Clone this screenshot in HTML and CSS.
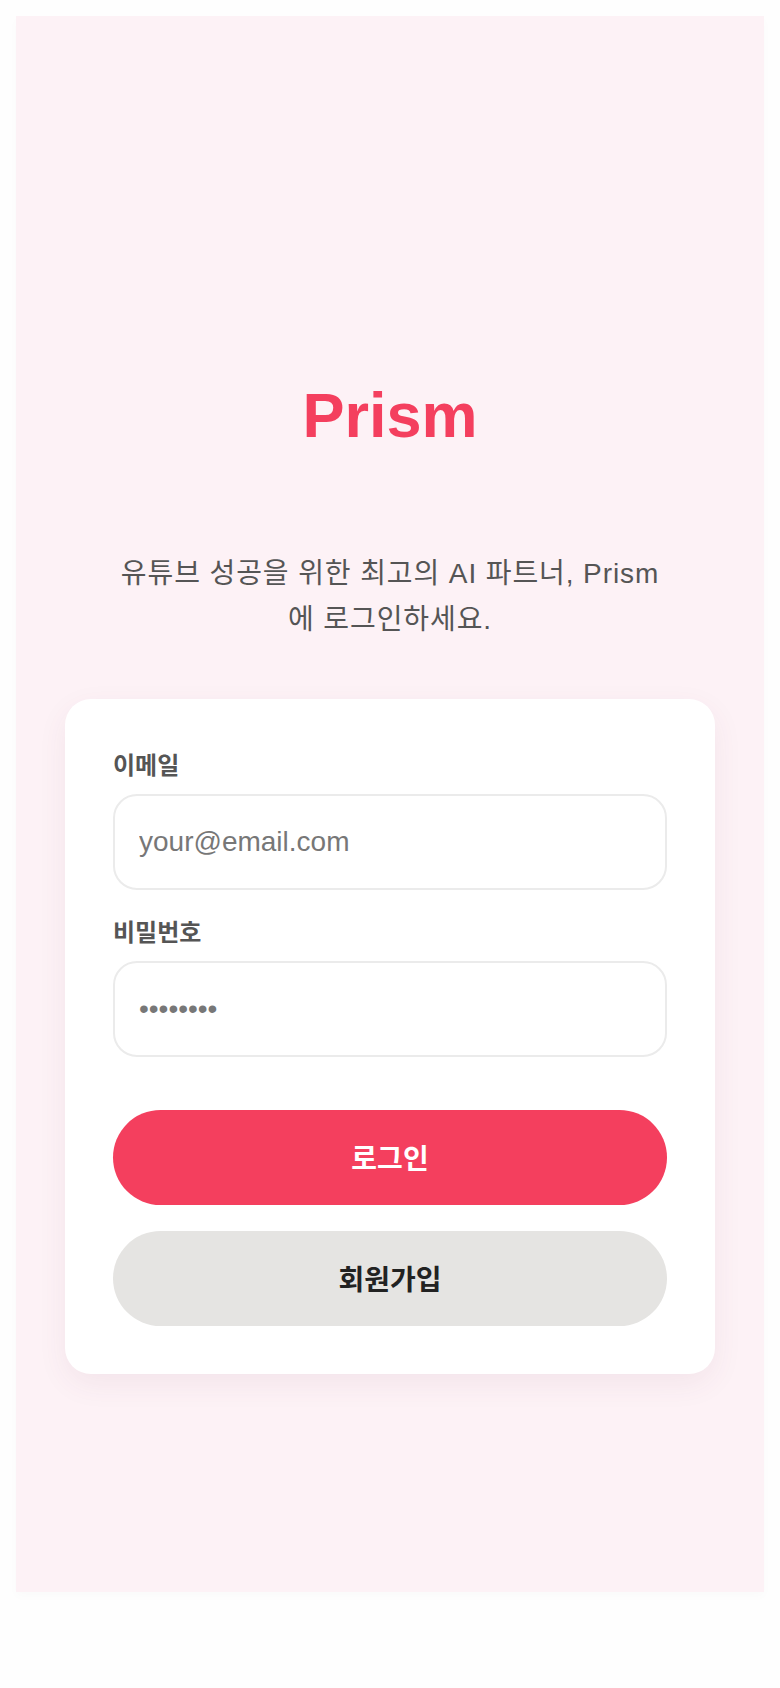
FILE: index.html
```html
<!DOCTYPE html>
<html lang="ko">
<head>
  <meta charset="UTF-8" />
  <meta name="viewport" content="width=device-width, initial-scale=1.0">
  <title>Prism - 로그인</title>
  <link rel="stylesheet" href="styles.css">
</head>
<body>
  <main class="screen">
    <h1 class="brand">Prism</h1>
    <p class="intro">유튜브 성공을 위한 최고의 AI 파트너, Prism에 로그인하세요.</p>

    <form class="login-card" onsubmit="return false">
      <div class="field">
        <label for="email">이메일</label>
        <input type="email" id="email" placeholder="your@email.com" />
      </div>
      <div class="field">
        <label for="password">비밀번호</label>
        <input type="password" id="password" placeholder="••••••••" />
      </div>

      <div class="actions">
        <button type="submit" class="btn btn-primary">로그인</button>
        <button type="button" class="btn btn-secondary">회원가입</button>
      </div>
    </form>
  </main>
</body>
</html>
```

FILE: styles.css
```css
* {
  box-sizing: border-box;
}
body {
  margin: 0;
  padding: 16px;
  background-color: #fefefe;
  font-family: "Liberation Sans", "Noto Sans CJK KR", Arial, sans-serif;
  color: #222;
}
.screen {
  min-height: 1576px;
  padding: 362px 49px 40px;
  background-color: #fdf2f6;
  box-shadow: 0 4px 10px rgba(0, 0, 0, 0.02);
}
.brand {
  margin: 0;
  text-align: center;
  font-size: 63px;
  line-height: 1.2;
  font-weight: 700;
  color: #f43f5e;
}
.intro {
  max-width: 560px;
  margin: 97px auto 56px;
  text-align: center;
  font-size: 28px;
  line-height: 46px;
  letter-spacing: 0.9px;
  color: #555;
}
.login-card {
  background-color: #fff;
  border-radius: 26px;
  padding: 50px 48px 48px;
  box-shadow: 0 10px 30px rgba(120, 60, 80, 0.07);
}
.field {
  display: flex;
  flex-direction: column;
  margin-bottom: 26px;
}
.field label {
  font-size: 24px;
  line-height: 34px;
  font-weight: 700;
  color: #555;
  margin-bottom: 11px;
}
.field input {
  width: 100%;
  padding: 30px 24px;
  font-family: inherit;
  font-size: 28px;
  line-height: 32px;
  color: #333;
  background-color: #fff;
  border: 2px solid #ebebeb;
  border-radius: 24px;
  outline: none;
}
.field input::placeholder {
  color: #777;
}
.actions {
  display: flex;
  flex-direction: column;
  gap: 26px;
  margin-top: 53px; /* collapses with the field's bottom margin */
}
.btn {
  height: 95px;
  border: none;
  border-radius: 999px;
  font-family: inherit;
  font-size: 28px;
  font-weight: 700;
  cursor: pointer;
}
.btn-primary {
  background-color: #f43f5e;
  color: #fff;
}
.btn-secondary {
  background-color: #e5e4e2;
  color: #222;
}
```
